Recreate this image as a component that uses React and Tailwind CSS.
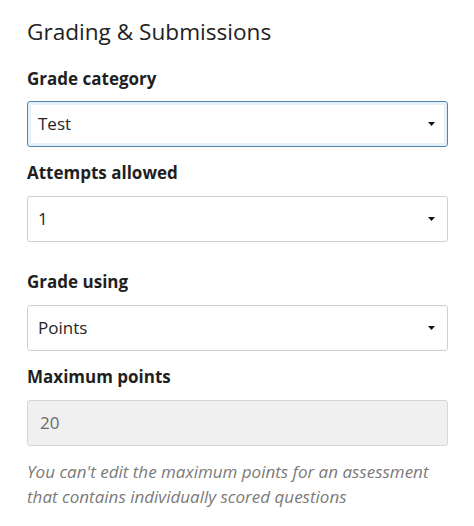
import React from 'react';

const Caret = () => (
    <svg width="7" height="4" viewBox="0 0 7 4" className="shrink-0">
        <path d="M0 0 L7 0 L3.5 4 Z" fill="#111" />
    </svg>
);

const SelectBox = ({ value, focused }) => (
    <div
        className={`h-[46px] flex items-center justify-between pl-[10px] pr-[12px] rounded-[3px] bg-white text-[17px] text-[#262626] ${
            focused
                ? 'border border-[#4f88ad] shadow-[inset_0_0_0_3px_#e6f0fa]'
                : 'border border-[#cfcfcf]'
        }`}
    >
        <span>{value}</span>
        <Caret />
    </div>
);

const Label = ({ children, className = '' }) => (
    <div className={`text-[17px] font-bold text-[#1f1f1f] leading-[26px] ${className}`}>{children}</div>
);

export default function App() {
    return (
        <div
            className="w-[474px] h-[526px] bg-white pl-[27px] pr-[26px] pt-[16px] overflow-hidden"
            style={{ fontFamily: '"Open Sans", sans-serif' }}
        >
            {/* Section title */}
            <h2 className="text-[22.6px] leading-[32px] text-[#222] font-normal">Grading &amp; Submissions</h2>

            {/* Grade category */}
            <Label className="mt-[18px]">Grade category</Label>
            <div className="mt-[9px]">
                <SelectBox value="Test" focused />
            </div>

            {/* Attempts allowed */}
            <Label className="mt-[13px]">Attempts allowed</Label>
            <div className="mt-[10px]">
                <SelectBox value="1" />
            </div>

            {/* Grade using */}
            <Label className="mt-[27px]">Grade using</Label>
            <div className="mt-[10px]">
                <SelectBox value="Points" />
            </div>

            {/* Maximum points */}
            <Label className="mt-[13px]">Maximum points</Label>
            <div className="mt-[10px] h-[46px] flex items-center pl-[12px] rounded-[3px] bg-[#f0f0f0] border border-[#d6d6d6] text-[17px] text-[#6b6b6b]">
                20
            </div>

            <p className="mt-[13px] text-[17px] leading-[25px] italic text-[#7a7a7a]">
                You can't edit the maximum points for an assessment that contains individually scored questions
            </p>
        </div>
    );
}
